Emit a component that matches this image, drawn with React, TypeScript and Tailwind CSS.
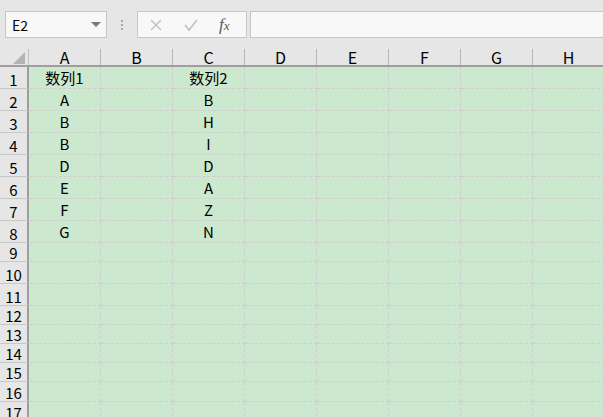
const cols = ["A", "B", "C", "D", "E", "F", "G", "H"];

const rows: { h: string; a?: string; c?: string }[] = [
  { h: "h-[22px]", a: "数列1", c: "数列2" },
  { h: "h-[22px]", a: "A", c: "B" },
  { h: "h-[22px]", a: "B", c: "H" },
  { h: "h-[22px]", a: "B", c: "I" },
  { h: "h-[22px]", a: "D", c: "D" },
  { h: "h-[22px]", a: "E", c: "A" },
  { h: "h-[22px]", a: "F", c: "Z" },
  { h: "h-[22px]", a: "G", c: "N" },
  { h: "h-[19px]" },
  { h: "h-[22px]" },
  { h: "h-[22px]" },
  { h: "h-[19px]" },
  { h: "h-[19px]" },
  { h: "h-[19px]" },
  { h: "h-[19px]" },
  { h: "h-[20px]" },
  { h: "h-[20px]" },
];

export default function App() {
  return (
    <div
      className="w-[603px] h-[417px] overflow-hidden bg-[#e6e6e6] text-black"
      style={{ fontFamily: '"Noto Sans CJK SC", "Liberation Sans", sans-serif' }}
    >
      {/* formula bar */}
      <div className="h-[49px] flex items-start pt-[11px] pl-[5px]">
        <div className="w-[102px] h-[27px] bg-[#f8f8f8] border border-[#c6c6c6] flex items-center justify-between pl-[6px] pr-[3px]">
          <span className="text-[14px] leading-none">E2</span>
          <svg width="12" height="8" viewBox="0 0 12 8" className="mr-[1px]">
            <path d="M1 1h10L6 6z" fill="#7a7a7a" />
          </svg>
        </div>
        <div className="w-[30px] h-[27px] flex flex-col items-center justify-center gap-[2px]">
          <span className="w-[2px] h-[2px] bg-[#a8a8a8]" />
          <span className="w-[2px] h-[2px] bg-[#a8a8a8]" />
          <span className="w-[2px] h-[2px] bg-[#a8a8a8]" />
        </div>
        <div className="w-[110px] h-[27px] bg-[#f8f8f8] border border-[#c6c6c6] flex items-center">
          <svg width="14" height="14" viewBox="0 0 14 14" className="ml-[11px]">
            <path d="M2 2l10 10M12 2L2 12" stroke="#c4c4c4" strokeWidth="1.5" fill="none" />
          </svg>
          <svg width="16" height="14" viewBox="0 0 16 14" className="ml-[20px]">
            <path d="M2 7l4 5L14 2" stroke="#c4c4c4" strokeWidth="1.8" fill="none" />
          </svg>
          <span
            className="ml-[20px] text-[17px] italic text-[#5a5a5a] leading-none"
            style={{ fontFamily: '"Liberation Serif", serif' }}
          >
            f<span className="text-[13px]">x</span>
          </span>
        </div>
        <div className="ml-[3px] flex-1 h-[27px] bg-[#f8f8f8] border border-[#c6c6c6] border-r-0" />
      </div>

      {/* column headers */}
      <div className="flex h-[18px] border-b-2 border-[#9e9e9e]">
        <div className="w-[29px] shrink-0 border-r border-[#c2c2c2] relative">
          <svg width="12" height="12" viewBox="0 0 12 12" className="absolute right-[3px] bottom-[1px]">
            <path d="M12 0v12H0z" fill="#b4b4b4" />
          </svg>
        </div>
        {cols.map((c) => (
          <div
            key={c}
            className="w-[72px] shrink-0 border-r border-[#b8b8b8] flex items-end justify-center text-[16px] leading-none"
          >
            {c}
          </div>
        ))}
      </div>

      {/* grid body */}
      {rows.map((r, i) => (
        <div key={i} className={`flex ${r.h}`}>
          <div className="w-[29px] shrink-0 border-r-2 border-b border-r-[#9e9e9e] border-b-[#c8c8c8] flex items-end justify-center text-[15px] leading-none pb-[1px]">
            {i + 1}
          </div>
          {cols.map((c) => (
            <div
              key={c}
              className="w-[72px] shrink-0 bg-[#cce8cf] border-r border-b border-dashed border-[#cfcfcf] flex items-center justify-center text-[15px] leading-none"
            >
              {c === "A" ? r.a : c === "C" ? r.c : ""}
            </div>
          ))}
        </div>
      ))}
    </div>
  );
}
